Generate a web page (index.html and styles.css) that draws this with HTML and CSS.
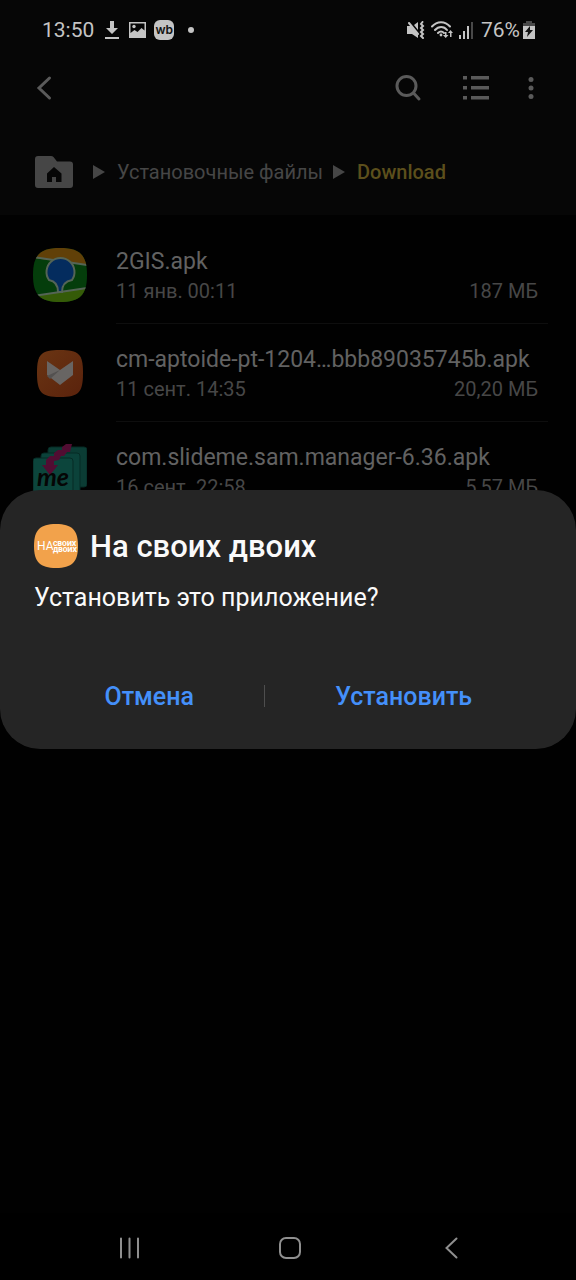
FILE: index.html
```html
<!DOCTYPE html>
<html lang="ru">
<head>
<meta charset="utf-8">
<meta name="viewport" content="width=device-width, initial-scale=1">
<title>Download</title>
<link rel="stylesheet" href="styles.css">
</head>
<body>
<div class="screen">
  <div class="top">
    <div class="status">
      <span class="clock">13:50</span>
      <svg class="st-download" width="14" height="20" viewBox="0 0 14 20"><path d="M5 1h4v7h4l-6 6-6-6h4zM0 17h14v2H0z"/></svg>
      <svg class="st-image" width="17" height="16" viewBox="0 0 17 16"><path fill-rule="evenodd" d="M0 0h17v16H0zM1.500 1.500v9.500l4-3 3 2 4-4 3 2.500V1.500z"/><circle cx="5" cy="4.500" r="1.700"/></svg>
      <span class="wb">wb</span>
      <span class="dot"></span>
      <span class="spacer"></span>
      <svg class="st-mute" width="18" height="18" viewBox="0 0 18 18"><path d="M0 5h4l7 8v4l-6-4H0zM7 4l4-3v8z"/><path class="line" d="M2 2l9 11M15.500 1l-1.500 2 2 2-2 2 2 2-2 2 2 2-2 2 2 2"/></svg>
      <svg class="st-wifi" width="24" height="18" viewBox="0 0 24 18"><path class="line" d="M1 5.500C6-.3 14-.3 19 5.500M4 9c3.500-4 9-4 12 0M7 12c2-2 4-2 6 0"/><circle cx="10" cy="14" r="1.400"/><path d="M14 11h1.500v3h2l-2.800 3-2.700-3h2zM19 16v-4h-2l2.500-3 2.500 3h-1.500v4z"/></svg>
      <svg class="st-signal" width="15" height="17" viewBox="0 0 15 17"><path d="M0 13h2v4H0zM4 9h2v8H4zM8 4h2v13H8z"/><path class="weak" d="M12 0h2v17h-2z"/></svg>
      <span class="battery-text">76%</span>
      <svg class="st-battery" width="12" height="18" viewBox="0 0 12 18"><path class="weak" d="M3 0h6v2h3v5H0V2h3z"/><path d="M0 5h12v13H0z"/><path class="bolt" d="M7 5L2 11h3l-1 5 6-7H7z"/></svg>
    </div>
    <header class="toolbar">
      <button class="icon-btn" aria-label="Назад"><svg width="16" height="26" viewBox="0 0 16 26"><path class="line" d="M13.500 3L3 13l10.500 10"/></svg></button>
      <span class="spacer"></span>
      <button class="icon-btn" aria-label="Поиск"><svg width="28" height="28" viewBox="0 0 28 28"><circle class="line" cx="12.500" cy="12" r="9.500"/><path class="line" d="M19.500 19l5.500 6"/></svg></button>
      <button class="icon-btn list-btn" aria-label="Вид"><svg width="28" height="28" viewBox="0 0 28 28"><path d="M1 2h4v3.500H1zM9 2h18v3.500H9zM1 12h4v3.500H1zM9 12h18v3.500H9zM1 22h4v3.500H1zM9 22h18v3.500H9z"/></svg></button>
      <button class="icon-btn more-btn" aria-label="Ещё"><svg width="6" height="24" viewBox="0 0 6 24"><circle cx="3" cy="3.500" r="2.500"/><circle cx="3" cy="12" r="2.500"/><circle cx="3" cy="20.500" r="2.500"/></svg></button>
    </header>
    <nav class="crumbs">
      <a href="#" class="home" aria-label="Главная"><svg width="38" height="32" viewBox="0 0 38 32"><path d="M3 0h13q1.500 0 2.500 1L22 5.500h13q3 0 3 3V29q0 3-3 3H3q-3 0-3-3V3q0-3 3-3z"/><path class="house" d="M19 11l7.500 6.500V26H21v-5h-4v5h-5v-8.500z"/></svg></a>
      <svg class="arrow" width="12" height="14" viewBox="0 0 12 14"><path d="M0 0l12 7-12 7z"/></svg>
      <a href="#">Установочные файлы</a>
      <svg class="arrow" width="12" height="14" viewBox="0 0 12 14"><path d="M0 0l12 7-12 7z"/></svg>
      <a href="#" class="current">Download</a>
    </nav>
  </div>

  <main class="files">
    <div class="file">
      <svg class="app-icon" width="54" height="54" viewBox="0 0 54 54">
        <defs><clipPath id="round"><path d="M27 0C47 0 54 7 54 27S47 54 27 54 0 47 0 27 7 0 27 0z"/></clipPath></defs>
        <g clip-path="url(#round)"><path fill="#043d0b" d="M0 0h54v54H0z"/><path fill="#614008" d="M0 0h54v17L0 10z"/><path fill="#355b08" d="M0 48l54-8v14H0z"/><path class="gis-line" d="M0 9l54 8M0 48l54-8"/><path fill="#042c5e" stroke="#546456" stroke-width="2" d="M25 44c0-7-3-11-9-12a14 14 0 1 1 23 0c-6 1-10 5-10 12z"/></g>
      </svg>
      <div class="info"><div class="name">2GIS.apk</div><div class="meta"><span>11 янв. 00:11</span><span>187 МБ</span></div></div>
    </div>
    <div class="file">
      <svg class="app-icon" width="54" height="54" viewBox="0 0 54 54">
        <defs><linearGradient id="orange" x2="1" y2="1"><stop stop-color="#6a3513"/><stop offset="1" stop-color="#5a220c"/></linearGradient></defs>
        <path fill="url(#orange)" d="M27 4C46 4 50 8 50 27s-4 24-23 24S4 46 4 27 8 4 27 4z"/><path fill="#686563" d="M14 15l13 9 13-9v14L27 39 14 29z"/><path fill="#535150" d="M14 30l13-6-10 9z"/>
      </svg>
      <div class="info"><div class="name">cm-aptoide-pt-1204…bbb89035745b.apk</div><div class="meta"><span>11 сент. 14:35</span><span>20,20 МБ</span></div></div>
    </div>
    <div class="file">
      <svg class="app-icon" width="54" height="54" viewBox="0 0 54 54">
        <g stroke="#062b25"><rect fill="#0b3c34" x="15" y="3" width="39" height="40" rx="3"/><rect fill="#0b423a" x="8" y="9" width="39" height="42" rx="3"/><rect fill="#0c453c" x="0" y="14" width="40" height="42" rx="3"/></g>
        <path fill="#510d32" d="M39 0h-6l-4 3v3h-4l-4 3v3h-4l-4 4v5h-4l8 10 8-10h-4v-4l5-1 2-4h3l3-4h3z"/><text class="me" x="4" y="42">me</text>
      </svg>
      <div class="info"><div class="name">com.slideme.sam.manager-6.36.apk</div><div class="meta"><span>16 сент. 22:58</span><span>5,57 МБ</span></div></div>
    </div>
  </main>

  <nav class="navbar">
    <button aria-label="Недавние"><svg width="22" height="22" viewBox="0 0 22 22"><path class="line" d="M2 1.500v19M10.500 1.500v19M19 1.500v19"/></svg></button>
    <button aria-label="Домой"><svg width="24" height="24" viewBox="0 0 24 24"><rect class="line" x="2" y="2" width="20" height="20" rx="6"/></svg></button>
    <button aria-label="Назад"><svg width="22" height="22" viewBox="0 0 22 22"><path class="line" d="M17.500 1.500L7.500 11l10 9.500"/></svg></button>
  </nav>
</div>

<div class="overlay">
  <section class="dialog" role="dialog" aria-labelledby="title">
    <div class="heading">
      <svg width="44" height="44" viewBox="0 0 44 44"><path fill="#f2a24b" d="M22 0C38 0 44 6 44 22S38 44 22 44 0 38 0 22 6 0 22 0z"/><text class="logo-big" x="3" y="26">НА</text><text class="logo-small" x="19" y="22">СВОИХ</text><text class="logo-small" x="19" y="28">ДВОИХ</text></svg>
      <h1 id="title">На своих двоих</h1>
    </div>
    <p>Установить это приложение?</p>
    <div class="actions">
      <button>Отмена</button><span class="sep"></span><button>Установить</button>
    </div>
  </section>
</div>
</body>
</html>
```
FILE: styles.css
```css
* { box-sizing: border-box; }
body { margin: 0; background: #010101; font-family: Roboto, "Liberation Sans", sans-serif; }
button { border: 0; padding: 0; background: none; font: inherit; color: inherit; }
svg { display: block; flex: none; fill: currentColor; }
a { color: inherit; text-decoration: none; }
.line { fill: none; stroke: currentColor; stroke-width: 3; stroke-linecap: round; }
.spacer { flex: 1; }
.screen { display: flex; flex-direction: column; min-height: 100vh; }
.top { background: #060606; padding-bottom: 16px; }

.status { display: flex; align-items: center; height: 60px; padding: 0 41px 0 42px; color: #c4c4c4; font-size: 21px; }
.status .line { stroke-width: 2; }
.st-download { margin-left: 11px; }
.st-image { margin-left: 10px; }
.wb { display: grid; place-items: center; width: 20px; height: 20px; margin-left: 8px; border-radius: 6px; background: #c4c4c4; color: #111; font: 600 12px/16px Inter, sans-serif; }
.dot { width: 6px; height: 6px; margin-left: 14px; border-radius: 50%; background: #c4c4c4; }
.st-wifi { margin-left: 6px; }
.st-signal { margin-left: 4px; }
.battery-text { margin-left: 7px; }
.st-battery { margin-left: 3px; }
.weak { fill: #494949; }
.bolt { fill: #111; }

.toolbar { display: flex; align-items: center; height: 56px; padding: 0 42px 0 36px; color: #5a5a5a; }
.list-btn { margin-left: 40px; }
.more-btn { margin-left: 38px; }

.crumbs { display: flex; align-items: center; height: 83px; padding: 28px 35px 0; color: #464646; font-size: 20px; }
.home { margin-right: 20px; }
.arrow { margin-right: 12px; }
.house { fill: #060606; }
.crumbs a:not(.home) + .arrow { margin-left: 10px; }
.current { color: #5c4f1c; font-weight: 500; }

.files { flex: 1; padding: 11px 28px 0 33px; }
.file { display: flex; align-items: center; gap: 29px; height: 98px; }
.info { flex: 1; height: 98px; padding: 21px 10px 0 0; border-bottom: 1px solid #0e0e0e; }
.name { color: #626262; font-size: 23px; line-height: 30px; }
.meta { display: flex; justify-content: space-between; color: #474747; font-size: 20px; line-height: 28px; }
.gis-line { fill: none; stroke: #546456; stroke-width: 2; }
.me { fill: #050505; font: italic 700 25px Lato, sans-serif; }

.navbar { display: flex; justify-content: space-around; align-items: center; height: 67px; padding: 2px 46px 0 50px; background: #000; color: #8f8f8f; }
.navbar .line { stroke-width: 2; }

.overlay { position: fixed; inset: 26px 0 67px; display: flex; align-items: center; }
.dialog { width: 100%; padding: 34px 34px 27px; border-radius: 40px; background: #252525; color: #fafafa; }
.heading { display: flex; align-items: flex-start; gap: 12px; }
h1 { margin: 0; font-size: 31px; line-height: 46px; font-weight: 500; }
p { margin: 10px 0 0; font-size: 25px; line-height: 36px; }
.logo-big { fill: #fff; font: 400 12px Roboto, sans-serif; }
.logo-small { fill: #fff; font: 900 7px Roboto, sans-serif; }
.actions { display: flex; align-items: center; margin-top: 54px; color: #4490fa; font-size: 25px; font-weight: 500; }
.actions button { flex: 5; height: 52px; }
.actions button:last-child { flex: 6; }
.sep { width: 1px; height: 22px; background: #4e4e4e; }
```
